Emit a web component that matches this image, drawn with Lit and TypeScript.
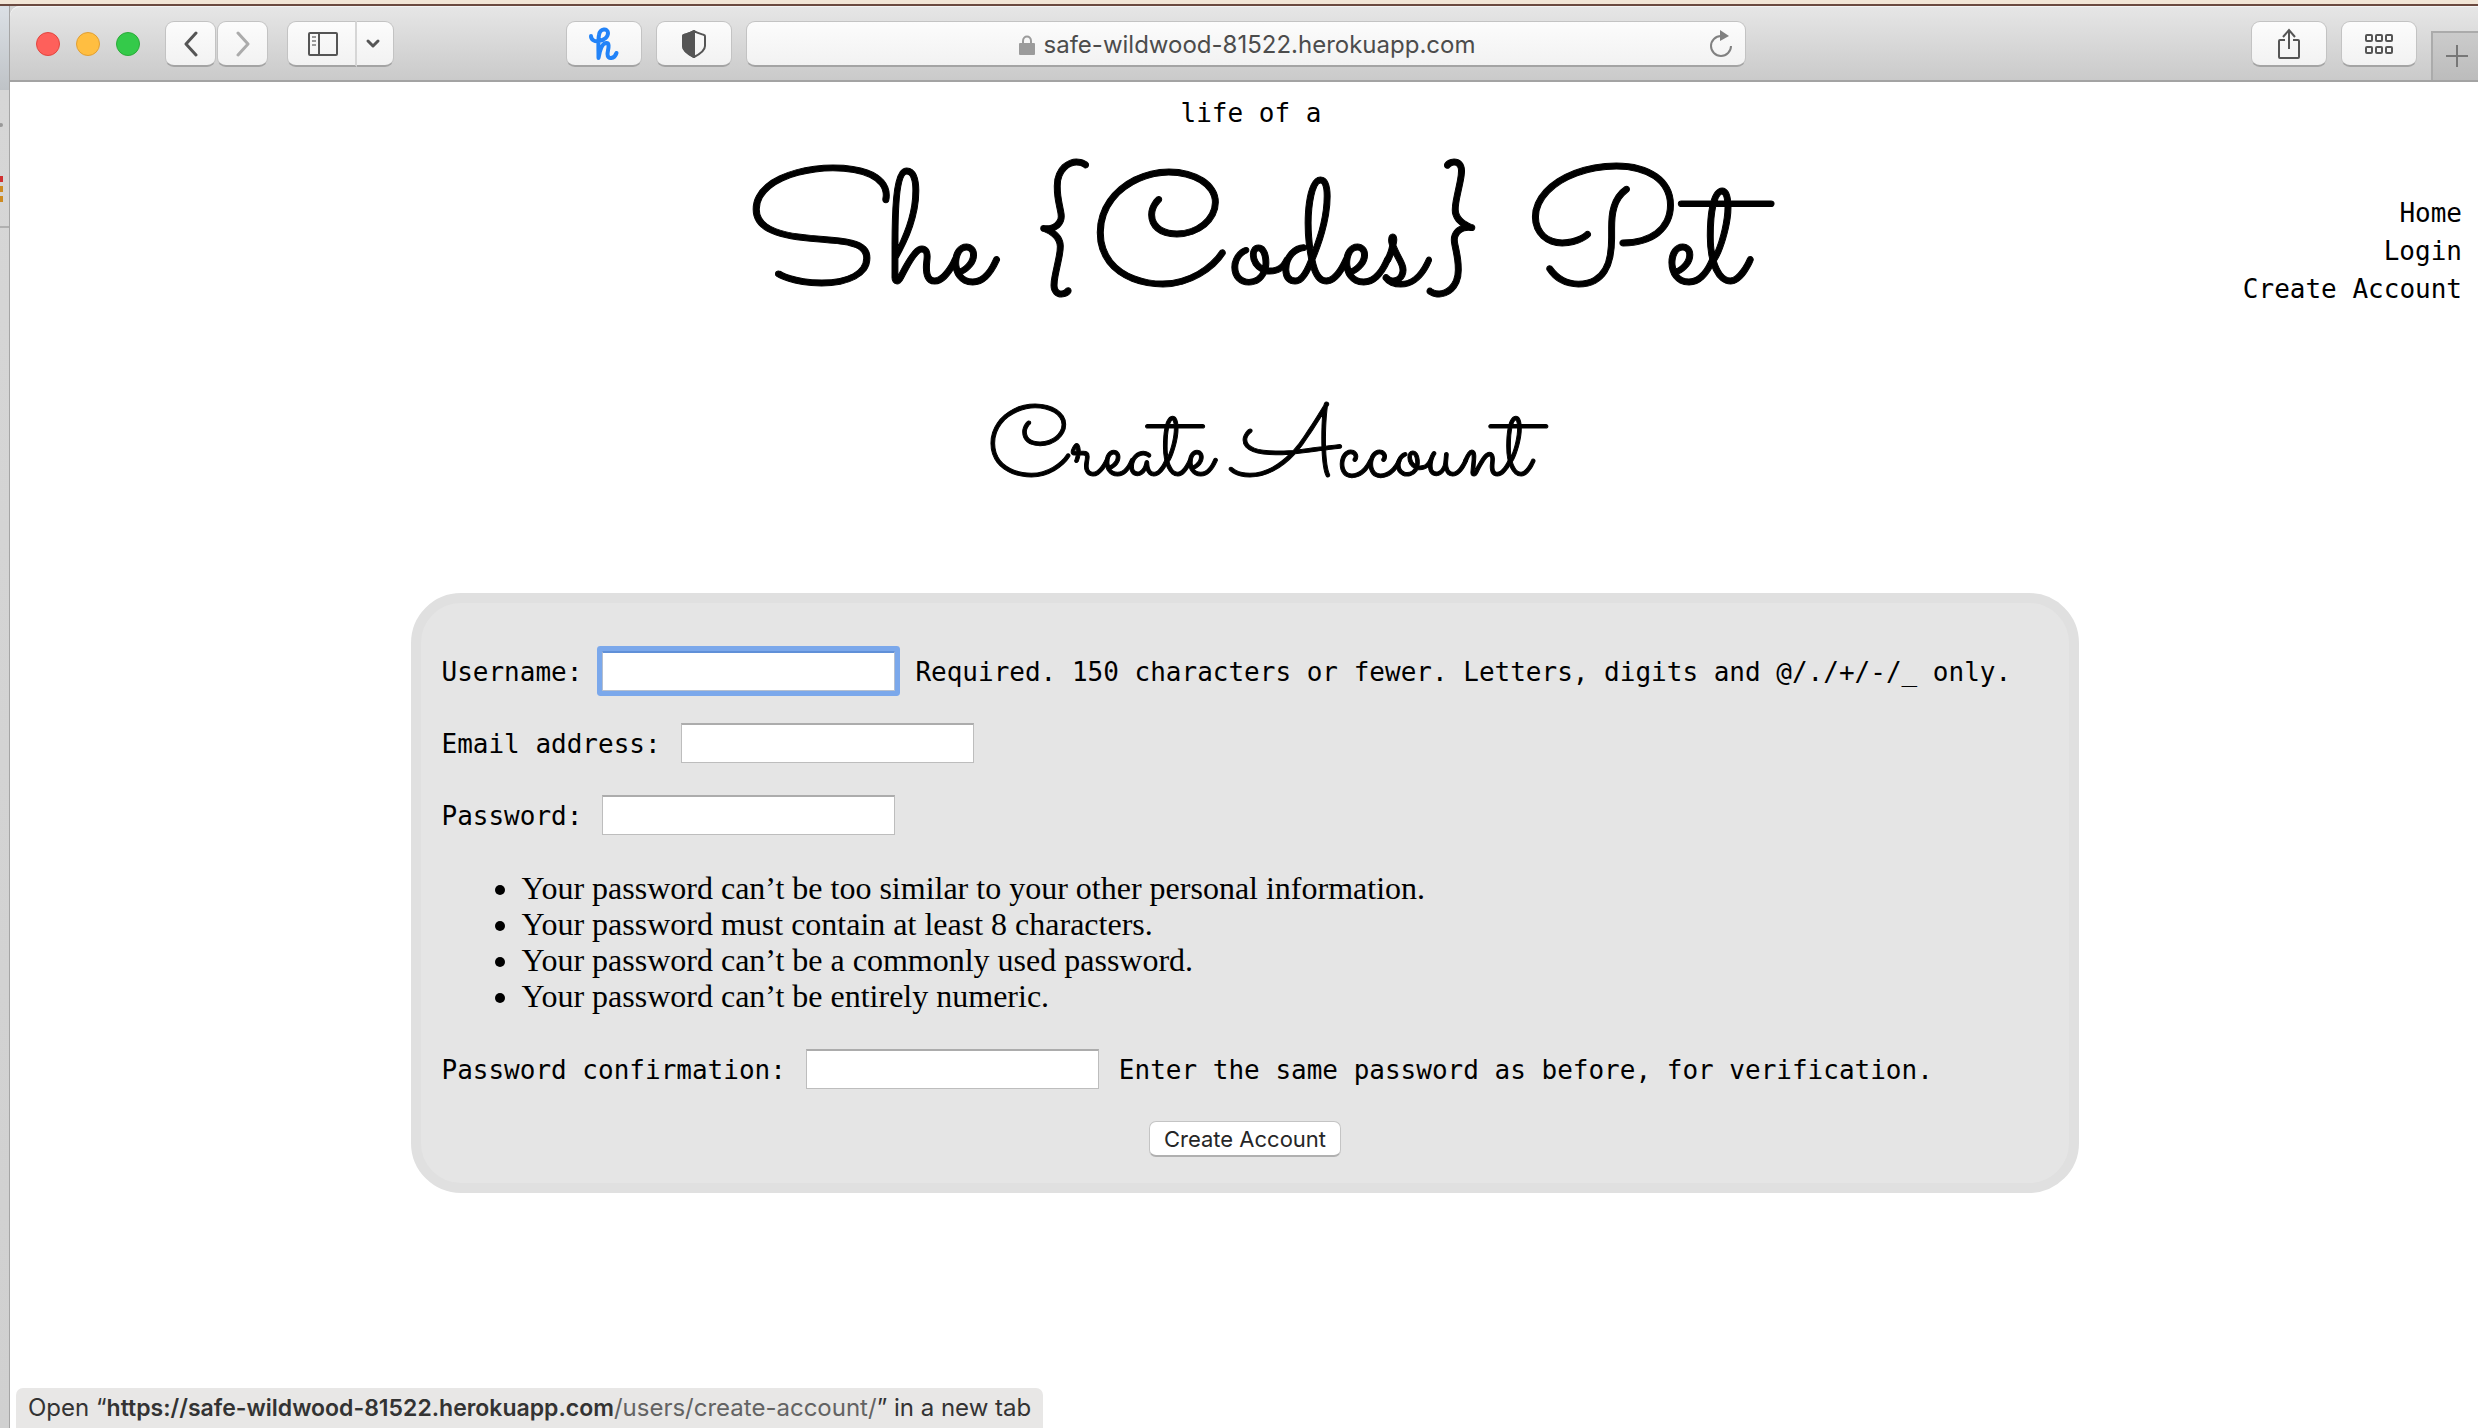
import { LitElement, html, css, svg } from "lit";
import { customElement } from "lit/decorators.js";

const base = css`
  *,
  *::before,
  *::after {
    box-sizing: border-box;
  }
  svg {
    display: block;
    fill: none;
  }
`;

const gridCells = [0, 10, 20].flatMap((x) => [0, 12].map((y) => ({ x, y })));

@customElement("browser-toolbar")
export class BrowserToolbar extends LitElement {
  static styles = [
    base,
    css`
      :host {
        display: flex;
        align-items: center;
        height: 76px;
        padding: 1px 0 0 26px;
        border-top: 1px solid #f4f4f4;
        border-bottom: 2px solid #a3a3a3;
        border-top-left-radius: 10px;
        background: linear-gradient(#e6e6e6, #cacaca);
        font-family: Inter, "Liberation Sans", sans-serif;
      }
      button {
        display: flex;
        align-items: center;
        justify-content: center;
        height: 46px;
        padding: 0;
        border: 1px solid #c3c3c3;
        border-bottom: 2px solid #a4a4a4;
        border-radius: 9px;
        background: linear-gradient(#fcfcfc, #f2f2f2);
        color: #555;
      }
      .lights {
        display: flex;
        gap: 16px;
        margin-right: 25px;
      }
      .light {
        width: 24px;
        height: 24px;
        border-radius: 50%;
        border: 1px solid;
      }
      .close {
        background: #fe605b;
        border-color: #e2463f;
      }
      .minimise {
        background: #ffbe41;
        border-color: #e19f34;
      }
      .zoom {
        background: #34ca4a;
        border-color: #2bab39;
      }
      .history {
        display: flex;
        gap: 1px;
        margin-right: 19px;
      }
      .history button {
        width: 51px;
      }
      .history .forward {
        color: #ababab;
      }
      .sidebar {
        display: flex;
        margin-right: 172px;
      }
      .panel {
        width: 70px;
        padding-left: 2px;
        border-right: 2px solid #d6d6d6;
        border-radius: 9px 0 0 9px;
      }
      .more {
        width: 37px;
        padding-right: 4px;
        border-left: 0;
        border-radius: 0 9px 9px 0;
      }
      .wide {
        width: 76px;
        margin-right: 14px;
      }
      .address {
        display: flex;
        align-items: center;
        flex: 0 1 1000px;
        height: 46px;
        padding: 0 8px 0 42px;
        border: 1px solid #c3c3c3;
        border-bottom: 2px solid #a4a4a4;
        border-radius: 9px;
        background: linear-gradient(#fcfcfc, #f2f2f2);
      }
      .site {
        display: flex;
        flex: 1;
        align-items: center;
        justify-content: center;
        gap: 9px;
        padding-top: 2px;
        font-size: 24px;
        line-height: 32px;
        color: #4c4c4c;
      }
      .address .reload {
        width: 32px;
        height: 36px;
        border: 0;
        background: none;
        color: #808080;
      }
      .space {
        flex: 1;
      }
      .new-tab {
        align-self: flex-end;
        width: 47px;
        height: 49px;
        padding: 0 0 2px 2px;
        border: solid #ababab;
        border-width: 2px 0 0 2px;
        border-radius: 0;
        background: linear-gradient(#cbcbcb, #bcbcbc);
        color: #777;
      }
    `,
  ];

  render() {
    return html`
      <div class="lights">
        <span class="light close"></span>
        <span class="light minimise"></span>
        <span class="light zoom"></span>
      </div>
      <div class="history">
        <button aria-label="Back">
          <svg width="16" height="26" stroke="currentColor" stroke-width="3" stroke-linecap="round" stroke-linejoin="round">
            <path d="M13 2 3 13l10 11" />
          </svg>
        </button>
        <button class="forward" aria-label="Forward">
          <svg width="16" height="26" stroke="currentColor" stroke-width="3" stroke-linecap="round" stroke-linejoin="round">
            <path d="m3 2 10 11L3 24" />
          </svg>
        </button>
      </div>
      <div class="sidebar">
        <button class="panel" aria-label="Sidebar">
          <svg width="30" height="24" stroke="currentColor" stroke-width="2">
            <rect x="1" y="1" width="28" height="22" rx="1" />
            <path d="M11 1v22" />
            <path d="M4 5h4M4 9h4M4 13h4" stroke="#999" />
          </svg>
        </button>
        <button class="more" aria-label="Sidebar options">
          <svg width="16" height="12" stroke="currentColor" stroke-width="3" stroke-linecap="round" stroke-linejoin="round">
            <path d="m3 3 5 5 5-5" />
          </svg>
        </button>
      </div>
      <button class="wide" aria-label="Honey">
        <svg width="32" height="34" stroke="#2283f8" stroke-linecap="round" stroke-linejoin="round">
          <path
            stroke-width="4"
            d="M3 9c0 4 4 6 8 5 5-1 9-4 9-8 0-5-8-5-9 2-1 4-.5 14-.5 23 1-6 3-15 8-15 4 0 1 8 1 11 0 6 7 5 9-1"
          />
        </svg>
      </button>
      <button class="wide" aria-label="Privacy report">
        <svg width="24" height="28" stroke="currentColor" stroke-width="2" stroke-linejoin="round">
          <path d="M12 1C9 3 5 4 2 5c-1 0-1 1-1 2v9c0 5 5 8 11 11 6-3 11-6 11-11V7c0-1 0-2-1-2-3-1-7-2-10-4Z" />
          <path fill="currentColor" d="M12 1C9 3 5 4 2 5c-1 0-1 1-1 2v9c0 5 5 8 11 11Z" />
        </svg>
      </button>
      <div class="address">
        <div class="site">
          <svg width="16" height="20">
            <path d="M4 9V6c0-6 8-6 8 0v3" stroke="#9b9b9b" stroke-width="2" />
            <rect y="8" width="16" height="12" rx="1" fill="#9b9b9b" />
          </svg>
          <span>safe-wildwood-81522.herokuapp.com</span>
        </div>
        <button class="reload" aria-label="Reload">
          <svg width="24" height="28" stroke="currentColor" stroke-width="2">
            <path d="M12 6a10 10 0 1 0 10 10" />
            <path d="M11 0v11l9-5Z" fill="currentColor" stroke="none" />
          </svg>
        </button>
      </div>
      <span class="space"></span>
      <button class="wide" aria-label="Share">
        <svg width="22" height="32" stroke="currentColor" stroke-width="2">
          <path d="M7 12H2q-1 0-1 1v16q0 1 1 1h18q1 0 1-1V13q0-1-1-1h-5M11 21V2M5 9l6-7 6 7" />
        </svg>
      </button>
      <button class="wide" aria-label="Tab overview">
        <svg width="28" height="20" stroke="currentColor" stroke-width="2">
          ${gridCells.map(({ x, y }) => svg`<rect x=${x + 1} y=${y + 1} width="6" height="6" rx="1" />`)}
        </svg>
      </button>
      <button class="new-tab" aria-label="New tab">
        <svg width="22" height="22" stroke="currentColor" stroke-width="2">
          <path d="M11 0v22M0 11h22" />
        </svg>
      </button>
    `;
  }
}

interface Field {
  id: string;
  label: string;
  type: string;
  help?: string;
  active?: boolean;
}

const fields: Field[] = [
  {
    id: "username",
    label: "Username:",
    type: "text",
    help: "Required. 150 characters or fewer. Letters, digits and @/./+/-/_ only.",
    active: true,
  },
  { id: "email", label: "Email address:", type: "email" },
  { id: "password", label: "Password:", type: "password" },
];

const confirmation: Field = {
  id: "password2",
  label: "Password confirmation:",
  type: "password",
  help: "Enter the same password as before, for verification.",
};

const rules = [
  "Your password can’t be too similar to your other personal information.",
  "Your password must contain at least 8 characters.",
  "Your password can’t be a commonly used password.",
  "Your password can’t be entirely numeric.",
];

@customElement("account-form")
export class AccountForm extends LitElement {
  static styles = [
    base,
    css`
      :host {
        display: block;
      }
      form {
        display: flex;
        flex-direction: column;
        gap: 32px;
        padding: 48px 20px 26px;
        border: 10px solid #e0e0e0;
        border-radius: 50px;
        background: #e5e5e5;
        font-family: "DejaVu Sans Mono", monospace;
        font-size: 26px;
        line-height: 40px;
      }
      .field {
        display: flex;
        align-items: center;
        gap: 20px;
        height: 40px;
      }
      label,
      .help {
        padding-top: 2px;
      }
      input {
        width: 293px;
        height: 40px;
        padding: 4px 8px;
        border: 1px solid #bdbdbd;
        border-top: 2px solid #acacac;
        background: #fff;
        font: inherit;
        outline: none;
      }
      input.active,
      input:focus {
        border-color: #6090d8 #b5bfcf #b5bfcf;
        border-radius: 1px;
        box-shadow: 0 0 0 5px #7ba8eb;
      }
      ul {
        margin: 0;
        padding: 3px 0 3px 80px;
        font-family: "Liberation Serif", serif;
        font-size: 32px;
        line-height: 36px;
      }
      .submit {
        align-self: center;
        height: 36px;
        padding: 0 14px;
        border: 1px solid #c4c4c4;
        border-bottom: 2px solid #b0b0b0;
        border-radius: 7px;
        background: #fff;
        color: #262626;
        font: 22px/32px Inter, "Liberation Sans", sans-serif;
      }
    `,
  ];

  private field(f: Field) {
    return html`
      <div class="field">
        <label for=${f.id}>${f.label}</label>
        <input id=${f.id} name=${f.id} type=${f.type} class=${f.active ? "active" : ""} />
        ${f.help ? html`<span class="help">${f.help}</span>` : ""}
      </div>
    `;
  }

  render() {
    return html`
      <form>
        ${fields.map((f) => this.field(f))}
        <ul>
          ${rules.map((rule) => html`<li>${rule}</li>`)}
        </ul>
        ${this.field(confirmation)}
        <button class="submit" type="button">Create Account</button>
      </form>
    `;
  }
}

@customElement("app-root")
export class AppRoot extends LitElement {
  static styles = [
    base,
    css`
      :host {
        display: grid;
        grid-template-columns: 10px 1fr;
        grid-template-rows: 6px 1fr;
        min-height: 100vh;
        background: #d4d4d4;
        color: #000;
      }
      .desktop {
        grid-column: 1 / -1;
        background: #f2e6d7;
        border-bottom: 2px solid #6b4a40;
      }
      .behind {
        border-right: 1px solid #a5a5a5;
        background: linear-gradient(#dbe0e5, #bfc3c7 84px, #d6d6d6 84px, #d0d0d0);
      }
      .behind svg {
        width: 9px;
        height: 240px;
      }
      .window {
        display: flex;
        flex-direction: column;
        min-width: 0;
        background: #fff;
        border-top-left-radius: 10px;
      }
      header {
        display: grid;
        grid-template-columns: 1fr auto 1fr;
        padding: 15px 16px 0 30px;
        font-family: "DejaVu Sans Mono", monospace;
        font-size: 26px;
        line-height: 32px;
      }
      .brand {
        grid-column: 2;
        text-align: center;
      }
      .tagline {
        margin: 0;
      }
      h1,
      h2 {
        margin: 0;
        font-family: Sacramento, "Liberation Serif", cursive;
        font-weight: 400;
        -webkit-text-stroke: 1px currentColor;
        text-align: center;
        white-space: nowrap;
      }
      h1 {
        margin-top: 22px;
        padding-right: 12px;
        font-size: 162px;
        line-height: 200px;
      }
      h2 {
        padding-left: 28px;
        font-size: 100px;
        line-height: 120px;
      }
      nav {
        display: flex;
        flex-direction: column;
        align-items: flex-end;
        padding-top: 97px;
        line-height: 38px;
      }
      a {
        color: inherit;
        text-decoration: none;
      }
      main {
        padding: 44px 0 0 2px;
      }
      account-form {
        width: 67.6%;
        margin: 78px auto 0;
      }
      .status {
        align-self: flex-start;
        margin: auto 0 0 6px;
        padding: 0 12px;
        border-radius: 7px 7px 0 0;
        background: #e8e7e6;
        color: #333;
        font: 24px/40px Inter, "Liberation Sans", sans-serif;
        white-space: nowrap;
      }
      .host {
        font-size: 23px;
        font-weight: 600;
      }
      .path {
        color: #636363;
      }
    `,
  ];

  render() {
    return html`
      <div class="desktop"></div>
      <div class="behind">
        <svg>
          <circle cx="1" cy="119" r="2" fill="#999" />
          <path d="M0 170h3v6H0z" fill="#d03030" />
          <path d="M0 180h3v6H0zM0 190h3v6H0z" fill="#cd8a20" />
          <path d="M0 220h9v2H0z" fill="#b0b0b0" />
        </svg>
      </div>
      <div class="window">
        <browser-toolbar></browser-toolbar>
        <header>
          <div class="brand">
            <p class="tagline">life of a</p>
            <h1>She {Codes} Pet</h1>
          </div>
          <nav>
            <a href="#home">Home</a>
            <a href="#login">Login</a>
            <a href="#create">Create Account</a>
          </nav>
        </header>
        <main>
          <h2>Create Account</h2>
          <account-form></account-form>
        </main>
        <div class="status">
          Open “<span class="host">https://safe-wildwood-81522.herokuapp.com</span
          ><span class="path">/users/create-account/</span>” in a new tab
        </div>
      </div>
    `;
  }
}
